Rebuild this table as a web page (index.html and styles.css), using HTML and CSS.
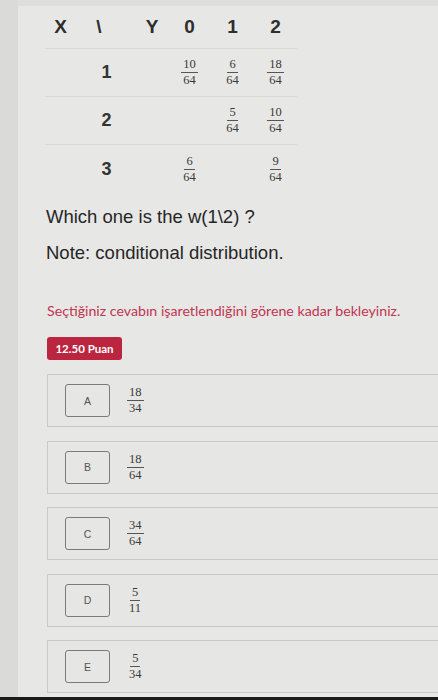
FILE: index.html
```html
<!DOCTYPE html>
<html>
<head>
<meta charset="utf-8">
<link rel="stylesheet" href="styles.css">
</head>
<body>
<div class="page">
  <div class="strip"></div>
  <div class="main">
    <table class="dist">
      <thead>
        <tr>
          <th class="lab"><span class="hx">X</span><span class="hs">\</span><span class="hy">Y</span></th>
          <th>0</th><th>1</th><th>2</th>
        </tr>
      </thead>
      <tbody>
        <tr>
          <td class="lab">1</td>
          <td><span class="frac"><span class="num">10</span><span class="den">64</span></span></td>
          <td><span class="frac"><span class="num">6</span><span class="den">64</span></span></td>
          <td><span class="frac"><span class="num">18</span><span class="den">64</span></span></td>
        </tr>
        <tr>
          <td class="lab">2</td>
          <td></td>
          <td><span class="frac"><span class="num">5</span><span class="den">64</span></span></td>
          <td><span class="frac"><span class="num">10</span><span class="den">64</span></span></td>
        </tr>
        <tr>
          <td class="lab">3</td>
          <td><span class="frac"><span class="num">6</span><span class="den">64</span></span></td>
          <td></td>
          <td><span class="frac"><span class="num">9</span><span class="den">64</span></span></td>
        </tr>
      </tbody>
    </table>

    <p class="q q1">Which one is the w(1\2) ?</p>
    <p class="q q2">Note: conditional distribution.</p>

    <p class="warn">Seçtiğiniz cevabın işaretlendiğini görene kadar bekleyiniz.</p>
    <div class="badge">12.50 Puan</div>

    <div class="options">
      <div class="opt"><span class="letter">A</span><span class="frac"><span class="num">18</span><span class="den">34</span></span></div>
      <div class="opt"><span class="letter">B</span><span class="frac"><span class="num">18</span><span class="den">64</span></span></div>
      <div class="opt"><span class="letter">C</span><span class="frac"><span class="num">34</span><span class="den">64</span></span></div>
      <div class="opt"><span class="letter">D</span><span class="frac"><span class="num">5</span><span class="den">11</span></span></div>
      <div class="opt"><span class="letter">E</span><span class="frac"><span class="num">5</span><span class="den">34</span></span></div>
    </div>
  </div>
</div>
<div class="bottom"></div>
</body>
</html>
```

FILE: styles.css
```css
html, body {
  margin: 0;
  padding: 0;
  background: #e6e6e4;
  overflow: hidden;
}
body {
  width: 438px;
  height: 700px;
  font-family: "Liberation Sans", Arial, sans-serif;
  color: #262626;
}
.page {
  display: flex;
  height: 697px;
}
.strip {
  width: 18px;
  flex: none;
  background: #dadad8;
}
.main {
  flex: 1;
  padding-top: 6px;
  background: #e7e7e5;
  box-shadow: inset 0 6px 0 #dededc;
  min-width: 0;
}
.dist {
  border-collapse: collapse;
  margin-left: 27px;
}
.dist th {
  font-size: 19px;
  font-weight: bold;
  color: #2e2e2e;
  height: 42px;
  padding: 0;
  text-align: center;
  width: 43px;
}
.dist th.lab {
  width: 123px;
  text-align: left;
}
.hx { display: inline-block; width: 15px; text-align: center; margin-left: 8px; }
.hs { display: inline-block; width: 12px; text-align: center; margin-left: 25px; }
.hy { display: inline-block; width: 14px; text-align: center; margin-left: 40px; }
.dist td {
  border-top: 1px solid #dadad8;
  height: 47px;
  padding: 0;
  text-align: center;
  vertical-align: middle;
}
.dist td.lab {
  font-size: 18px;
  font-weight: bold;
  color: #333;
}
.dist tr:last-child td { height: 48px; }

.frac {
  display: inline-flex;
  flex-direction: column;
  align-items: center;
  font-family: "Liberation Serif", "Times New Roman", serif;
  font-size: 12.5px;
  line-height: 13px;
  color: #3a3a3a;
  vertical-align: middle;
}
.num {
  padding: 0 2px 1px;
  border-bottom: 1px solid #555;
}
.den {
  padding: 1px 2px 0;
}

.q {
  margin: 0;
  padding-left: 28px;
  font-size: 18.5px;
  line-height: 22px;
  color: #262626;
}
.q1 { margin-top: 13px; }
.q2 { margin-top: 14px; }

.warn {
  margin: 38px 0 0 29px;
  font-family: Lato, "Open Sans", sans-serif;
  font-size: 14.2px;
  line-height: 17px;
  color: #c23450;
}
.badge {
  margin: 18px 0 0 29px;
  width: 75px;
  height: 23px;
  border-radius: 3px;
  background: #bc2540;
  color: #fff;
  font-family: Lato, "Open Sans", sans-serif;
  font-weight: bold;
  font-size: 11.5px;
  line-height: 23px;
  text-align: center;
}
.options {
  margin: 14px 0 0 29px;
  display: flex;
  flex-direction: column;
  gap: 13.5px;
}
.opt {
  height: 51px;
  border: 1px solid #c9c9c7;
  border-right: 0;
  display: flex;
  align-items: center;
  background: #e6e6e4;
}
.letter {
  margin-left: 17px;
  width: 43px;
  height: 31px;
  border: 1px solid #7a7a7a;
  border-radius: 3px;
  display: flex;
  align-items: center;
  justify-content: center;
  font-size: 10.5px;
  color: #555;
}
.opt .frac {
  margin-left: 17px;
}
.bottom {
  height: 3px;
  background: #1a1a1a;
}
```
